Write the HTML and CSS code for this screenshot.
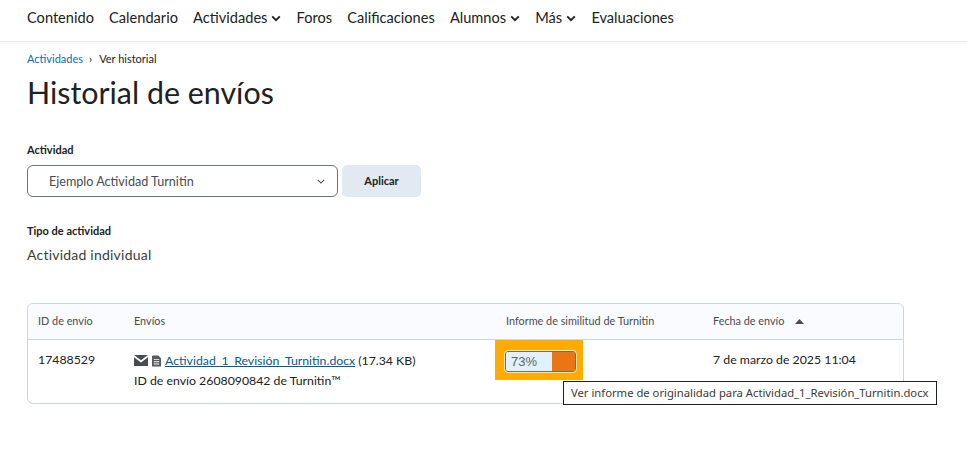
FILE: index.html
```html
<!DOCTYPE html>
<html lang="es">
<head>
<meta charset="utf-8">
<title>Historial de envíos</title>
<link rel="stylesheet" href="styles.css">
</head>
<body>
<nav class="topnav">
  <a class="nav-item">Contenido</a>
  <a class="nav-item">Calendario</a>
  <a class="nav-item">Actividades <svg class="chev" viewBox="0 0 10 7"><path d="M1.2 1.4 5 5.2l3.8-3.8" /></svg></a>
  <a class="nav-item">Foros</a>
  <a class="nav-item">Calificaciones</a>
  <a class="nav-item">Alumnos <svg class="chev" viewBox="0 0 10 7"><path d="M1.2 1.4 5 5.2l3.8-3.8" /></svg></a>
  <a class="nav-item">Más <svg class="chev" viewBox="0 0 10 7"><path d="M1.2 1.4 5 5.2l3.8-3.8" /></svg></a>
  <a class="nav-item">Evaluaciones</a>
</nav>
<main class="page">
  <div class="crumbs"><a class="crumb-link">Actividades</a><span class="crumb-sep">›</span><span>Ver historial</span></div>
  <h1 class="title">Historial de envíos</h1>
  <div class="label label-activity">Actividad</div>
  <div class="filter">
    <div class="select">
      <span>Ejemplo Actividad Turnitin</span>
      <svg class="select-chev" viewBox="0 0 10 6"><path d="M1 1l4 4 4-4" /></svg>
    </div>
    <button class="apply">Aplicar</button>
  </div>
  <div class="label label-type">Tipo de actividad</div>
  <div class="type-value">Actividad individual</div>
  <div class="table">
    <div class="row head">
      <div class="c1">ID de envío</div>
      <div class="c2">Envíos</div>
      <div class="c3">Informe de similitud de Turnitin</div>
      <div class="c4">Fecha de envío <svg class="sort" viewBox="0 0 9 5"><path d="M4.5 0 9 5H0z" /></svg></div>
    </div>
    <div class="row body">
      <div class="c1 id">17488529</div>
      <div class="c2">
        <div class="file">
          <svg class="ico-mail" viewBox="0 0 14 11"><path d="M0 0h14L7 5.2z" /><path d="M0 2.2 7 7.4l7-5.2V11H0z" /></svg>
          <svg class="ico-doc" viewBox="0 0 10 12"><path fill-rule="evenodd" d="M1 0h6l3 3v9H0V1a1 1 0 0 1 1-1zM2 4v1h6V4zm0 2.4v1h6v-1zm0 2.4v1h6v-1z" /></svg>
          <a class="file-link">Actividad_1_Revisión_Turnitin.docx</a> <span>(17.34 KB)</span>
        </div>
        <div class="tii">ID de envío 2608090842 de Turnitin™</div>
      </div>
      <div class="c3 score-cell">
        <div class="highlight">
          <div class="score"><span class="score-text">73%</span><span class="score-color"></span></div>
        </div>
        <div class="tooltip">Ver informe de originalidad para Actividad_1_Revisión_Turnitin.docx</div>
      </div>
      <div class="c4 date">7 de marzo de 2025 11:04</div>
    </div>
  </div>
</main>
</body>
</html>
```
FILE: styles.css
```css
* { box-sizing: border-box; }
html, body { margin: 0; padding: 0; }
body {
  min-height: 100vh;
  background: #fff;
  color: #202122;
  font-family: Lato, "Liberation Sans", sans-serif;
}
.topnav {
  height: 42px;
  display: flex;
  align-items: center;
  gap: 15.2px;
  padding: 0 27px 7px;
  border-bottom: 1px solid #e6e8ea;
  box-shadow: 0 1px 2px rgba(0,0,0,.03);
  font-size: 14.6px;
}
.nav-item { display: flex; align-items: center; gap: 4px; white-space: nowrap; color: #202122; }
.chev { width: 10px; height: 7px; margin-top: 2px; fill: none; stroke: #202122; stroke-width: 1.9; }
.page { padding: 8px 27px 0; }
.crumbs {
  display: flex;
  align-items: center;
  height: 16px;
  font-size: 11px;
}
.crumb-link { color: #006fbf; }
.crumb-sep { margin: 0 7px 0 6px; font-size: 11px; }
.title {
  margin: 7px 0 0;
  font-size: 30.4px;
  line-height: 38px;
  font-weight: 400;
}
.label { font-size: 11px; font-weight: 700; line-height: 14px; }
.label-activity { margin-top: 32px; }
.filter { display: flex; gap: 4px; margin-top: 8px; }
.select {
  width: 311px;
  height: 32px;
  padding: 0 12px 0 21px;
  display: flex;
  align-items: center;
  justify-content: space-between;
  border: 1px solid #6e7477;
  border-radius: 6px;
  font-size: 12.6px;
  color: #494c4e;
}
.select-chev { width: 8px; height: 5px; fill: none; stroke: #494c4e; stroke-width: 1.3; }
.apply {
  width: 79px;
  height: 32px;
  padding: 0 0 2px;
  border: 0;
  border-radius: 5px;
  background: #e3e9f1;
  color: #202122;
  font: 700 11px Lato, sans-serif;
}
.label-type { margin-top: 27px; }
.type-value { margin-top: 8px; font-size: 14px; line-height: 18px; color: #393c3e; letter-spacing: .22px; }
.table {
  width: 877px;
  height: 101px;
  margin-top: 39px;
  border: 1px solid #cdd5dc;
  border-radius: 6px;
  font-size: 12.3px;
  color: #494c4e;
}
.row { display: grid; grid-template-columns: 96px 372px 207px 1fr; padding-left: 10px; }
.head {
  height: 36px;
  padding-bottom: 3px;
  align-items: center;
  background: #f9fbff;
  border-bottom: 1px solid #cdd5dc;
  border-radius: 6px 6px 0 0;
  font-size: 10.85px;
}
.head .c4 { display: flex; align-items: center; gap: 11px; }
.sort { width: 9px; height: 5px; fill: #494c4e; margin-top: 3px; }
.body { height: 63px; color: #202122; }
.id, .date { padding-top: 12px; line-height: 16px; }
.file { display: flex; align-items: center; gap: 3px; margin-top: 12px; height: 16px; white-space: pre; }
.ico-mail { width: 14px; height: 11px; fill: #494c4e; margin-top: 1px; }
.ico-doc { width: 9px; height: 12px; margin-left: 1px; fill: #565a5c; margin-top: 1px; }
.file-link { margin-left: 1px; color: #035a94; text-decoration: underline; }
.tii { margin-top: 5px; line-height: 16px; }
.score-cell { position: relative; }
.highlight {
  width: 88px;
  height: 40px;
  margin-left: -11px;
  padding: 11px 0 0 10px;
  background: #ffab00;
}
.score {
  width: 71px;
  height: 21px;
  display: flex;
  border: 1px solid #6e6e6e;
  border-radius: 3px;
  outline: 1px solid #ffe6b0;
  overflow: hidden;
}
.score-text {
  width: 46px;
  padding-left: 5px;
  background: #e1f2fe;
  color: #5f6368;
  font: 13px/19px "Liberation Sans", sans-serif;
}
.score-color { flex: 1; background: #e97613; }
.tooltip {
  position: absolute;
  z-index: 5;
  left: 57px;
  top: 41px;
  width: 374px;
  height: 24px;
  padding-left: 7px;
  border: 1px solid #202020;
  background: #fff;
  color: #3a3a3a;
  font: 11.25px/22px "Noto Sans", sans-serif;
  white-space: nowrap;
}
```
